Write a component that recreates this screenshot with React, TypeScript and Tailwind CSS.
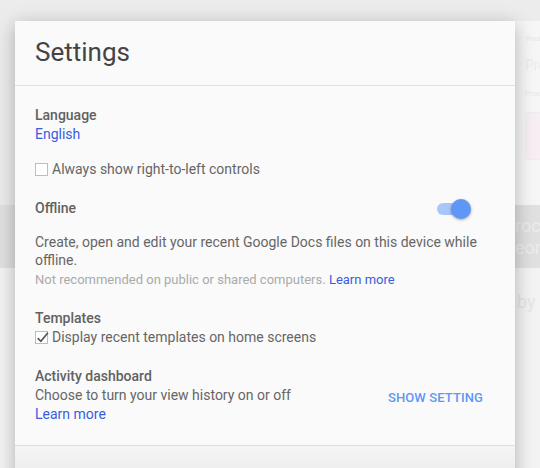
import React from 'react';

function Checkbox({ checked }: { checked?: boolean }) {
  return (
    <span className="relative inline-flex h-[13px] w-[13px] shrink-0 items-center justify-center border border-[#bdbdbd] bg-white">
      {checked && (
        <svg viewBox="0 0 14 14" className="absolute -left-[1px] -top-[2px] h-[15px] w-[15px]">
          <path d="M2.5 7.5 L5.5 10.5 L12 2.5" fill="none" stroke="#555" strokeWidth="1.6" />
        </svg>
      )}
    </span>
  );
}

function Toggle() {
  return (
    <span className="relative inline-block h-[12px] w-[30px]">
      <span className="absolute inset-0 rounded-full bg-[#a9c6f8]" />
      <span className="absolute -right-[4px] -top-[4px] h-[20px] w-[20px] rounded-full bg-[#5e97f6] shadow-[0_1px_3px_rgba(0,0,0,0.35)]" />
    </span>
  );
}

// faded page behind the dialog
function Background() {
  return (
    <div className="flex h-[468px] w-[540px] flex-col bg-[#ededed] whitespace-nowrap">
      <div className="h-[205px] bg-[#ececec]">
        <div className="ml-[515px] mt-[21px] h-[184px] bg-[#f6f6f6] pl-[10px] pt-[12px] text-[8px] text-[#e8e8e8]">
          <div>Your G</div>
          <div className="mt-[10px] text-[14px] text-[#ededed]">Prod</div>
          <div className="mt-[12px]">Produc</div>
          <div className="mt-[12px] h-[48px] w-[20px] rounded-l border border-[#eeeeee] bg-[#f6eef2]" />
        </div>
      </div>
      <div className="flex h-[63px] flex-col justify-center bg-[#e0e0e0] pl-[515px] text-[18px] leading-[22px] text-[#ececec]">
        <span>roch</span>
        <span>eom</span>
      </div>
      <div className="flex-1 bg-[#f3f3f3] pl-[517px] pt-[20px] text-[18px] text-[#e6e6e6]">
        by a
      </div>
    </div>
  );
}

export default function App() {
  return (
    <div className="relative h-[468px] w-[540px] overflow-hidden font-['Roboto',sans-serif]">
      <Background />

      <div className="absolute left-[15px] top-[21px] w-[500px] bg-[#fafafa] shadow-[0_4px_18px_rgba(0,0,0,0.28)]">
        <div className="border-b border-[#e0e0e0] px-[20px] pb-[16px] pt-[14px]">
          <h1 className="text-[26px] leading-[34px] text-[#444]">Settings</h1>
        </div>

        <div className="px-[20px] pt-[20px] pb-[21px] text-[14px] leading-[19px] text-[#666]">
          <div className="font-medium text-[#616161]">Language</div>
          <div className="text-[#3b5ce0]">English</div>

          <label className="mt-[16px] flex items-center gap-[4px]">
            <Checkbox />
            <span>Always show right-to-left controls</span>
          </label>

          <div className="mt-[20px] flex items-center justify-between pr-[28px]">
            <span className="font-medium text-[#616161]">Offline</span>
            <Toggle />
          </div>

          <p className="mt-[15px] leading-[18px]">
            Create, open and edit your recent Google Docs files on this device while offline.
          </p>
          <p className="mt-[2px] text-[13px] leading-[18px] text-[#aaa]">
            Not recommended on public or shared computers. <span className="text-[#3b5ce0]">Learn more</span>
          </p>

          <div className="mt-[20px] font-medium text-[#616161]">Templates</div>
          <label className="flex items-center gap-[4px]">
            <Checkbox checked />
            <span>Display recent templates on home screens</span>
          </label>

          <div className="mt-[20px] flex items-center justify-between pr-[12px]">
            <div>
              <div className="font-medium text-[#616161]">Activity dashboard</div>
              <div>Choose to turn your view history on or off</div>
              <div className="text-[#3b5ce0]">Learn more</div>
            </div>
            <span className="mt-[4px] text-[13px] font-medium tracking-[0.1px] text-[#5e97f6]">SHOW SETTING</span>
          </div>
        </div>

        <div className="h-[40px] border-t border-[#dedede] bg-gradient-to-b from-[#f5f5f5] to-[#e9e9e9]" />
      </div>
    </div>
  );
}
